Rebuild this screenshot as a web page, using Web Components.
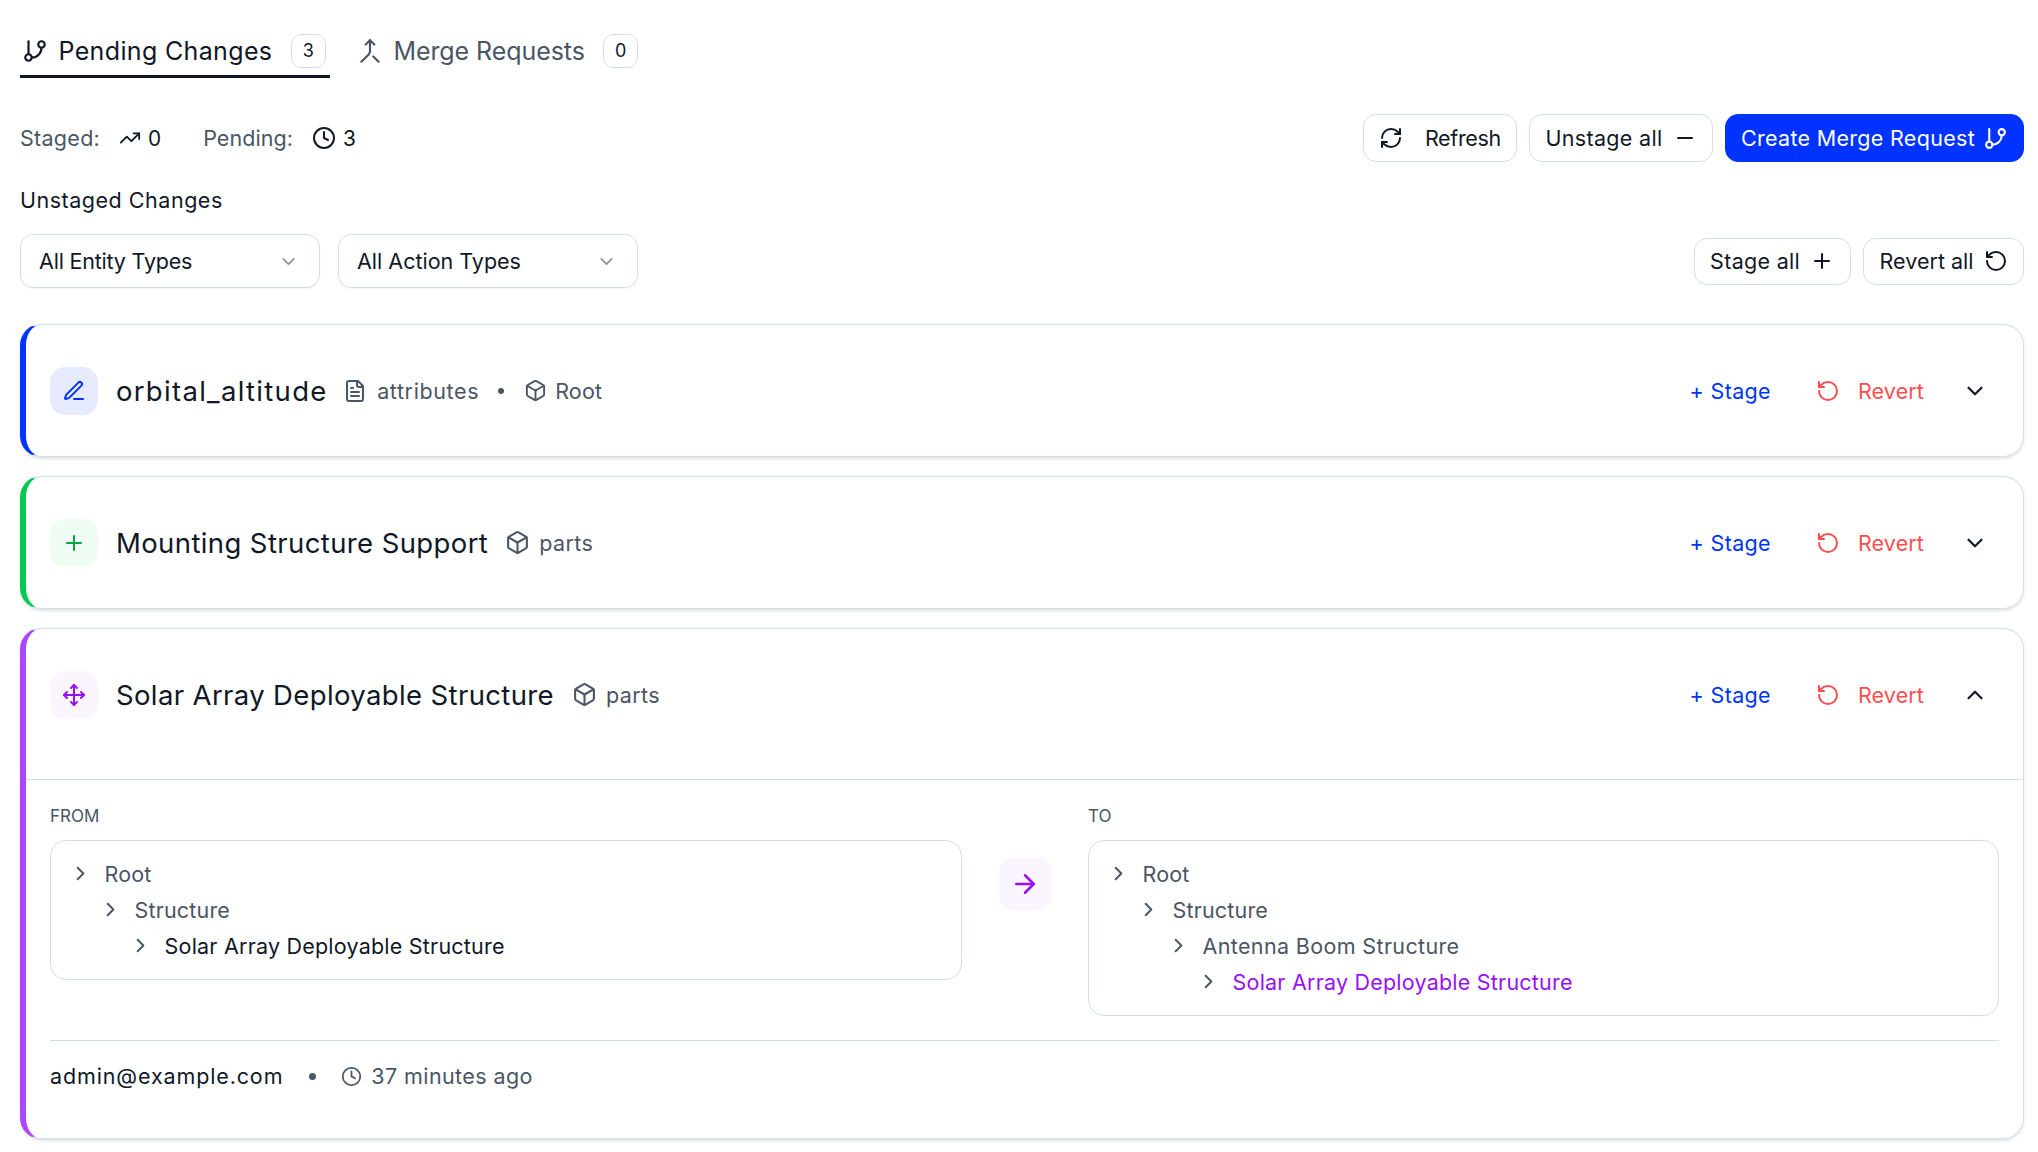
<!DOCTYPE html>
<html>
<head>
<meta charset="utf-8">
<title>Pending Changes</title>
<style>
    html, body { margin: 0; background: #fff; }
    body { font: 400 21.5px "Inter", "Liberation Sans", sans-serif; color: #101828; }
</style>
</head>
<body>
<changes-page></changes-page>

<script>
    const ICONS = {
        branch: '<line x1="6" x2="6" y1="3" y2="15"/><circle cx="18" cy="6" r="3"/><circle cx="6" cy="18" r="3"/><path d="M18 9a9 9 0 0 1-9 9"/>',
        merge: '<path d="m8 6 4-4 4 4"/><path d="M12 2v10.3a4 4 0 0 1-1.172 2.872L4 22"/><path d="m20 22-5-5"/>',
        trending: '<path d="M22 7 13.5 15.5 8.5 10.5 2 17"/><path d="M16 7h6v6"/>',
        clock: '<circle cx="12" cy="12" r="10"/><path d="M12 6v6l4 2"/>',
        refresh: '<path d="M3 12a9 9 0 0 1 9-9 9.75 9.75 0 0 1 6.74 2.74L21 8"/><path d="M21 3v5h-5"/><path d="M21 12a9 9 0 0 1-9 9 9.75 9.75 0 0 1-6.74-2.74L3 16"/><path d="M8 16H3v5"/>',
        minus: '<path d="M5 12h14"/>',
        plus: '<path d="M5 12h14"/><path d="M12 5v14"/>',
        undo: '<path d="M3 12a9 9 0 1 0 9-9 9.75 9.75 0 0 0-6.74 2.74L3 8"/><path d="M3 3v5h5"/>',
        pen: '<path d="M12 20h9"/><path d="M16.376 3.622a1 1 0 0 1 3.002 3.002L7.368 18.635a2 2 0 0 1-.855.506l-2.872.838a.5.5 0 0 1-.62-.62l.838-2.872a2 2 0 0 1 .506-.854z"/>',
        file: '<path d="M15 2H6a2 2 0 0 0-2 2v16a2 2 0 0 0 2 2h12a2 2 0 0 0 2-2V7Z"/><path d="M14 2v4a2 2 0 0 0 2 2h4"/><path d="M10 9H8"/><path d="M16 13H8"/><path d="M16 17H8"/>',
        box: '<path d="M21 8a2 2 0 0 0-1-1.73l-7-4a2 2 0 0 0-2 0l-7 4A2 2 0 0 0 3 8v8a2 2 0 0 0 1 1.73l7 4a2 2 0 0 0 2 0l7-4A2 2 0 0 0 21 16Z"/><path d="m3.3 7 8.7 5 8.7-5"/><path d="M12 22V12"/>',
        move: '<path d="M12 2v20"/><path d="m15 19-3 3-3-3"/><path d="m19 9 3 3-3 3"/><path d="M2 12h20"/><path d="m5 9-3 3 3 3"/><path d="m9 5 3-3 3 3"/>',
        down: '<path d="m6 9 6 6 6-6"/>',
        up: '<path d="m18 15-6-6-6 6"/>',
        right: '<path d="m9 18 6-6-6-6"/>',
        arrow: '<path d="M5 12h14"/><path d="m12 5 7 7-7 7"/>'
    };

    class UiIcon extends HTMLElement {
        connectedCallback() {
            const size = this.getAttribute("size") || 24;
            const stroke = this.getAttribute("stroke") || 2;
            this.attachShadow({ mode: "open" }).innerHTML = `
                <style>
                    :host { display: inline-flex; flex: none; width: ${size}px; height: ${size}px; }
                    svg { width: 100%; height: 100%; fill: none; stroke: currentColor; stroke-width: ${stroke}; stroke-linecap: round; stroke-linejoin: round; }
                </style>
                <svg viewBox="0 0 24 24">${ICONS[this.getAttribute("name")]}</svg>`;
        }
    }

    class TabItem extends HTMLElement {
        connectedCallback() {
            const active = this.hasAttribute("active");
            this.attachShadow({ mode: "open" }).innerHTML = `
                <style>
                    :host { display: flex; align-items: center; height: 54px; padding: 2px 4px 0 2px; box-sizing: border-box;
                            font-size: 25px; color: ${active ? "#101828" : "#4a5565"};
                            border-bottom: 3px solid ${active ? "#101828" : "transparent"}; margin-top: 24px; }
                    ui-icon { margin-right: 10.5px; }
                    .badge { margin-left: 18.5px; width: 35px; height: 34px; box-sizing: border-box; display: flex; align-items: center; justify-content: center;
                             border: 1.3px solid #d5dde9; border-radius: 10px; font-size: 18px; letter-spacing: 0; color: #101828; }
                </style>
                <ui-icon name="${this.getAttribute("icon")}" size="26"></ui-icon>
                <slot></slot>
                <span class="badge">${this.getAttribute("count")}</span>`;
        }
    }

    class StatItem extends HTMLElement {
        connectedCallback() {
            this.attachShadow({ mode: "open" }).innerHTML = `
                <style>
                    :host { display: flex; align-items: center; }
                    .label { color: #4a5565; margin-right: 19px; }
                    .value { margin-left: 7px; letter-spacing: 0; font-size: 20.8px; }
                </style>
                <span class="label"><slot></slot></span>
                <ui-icon name="${this.getAttribute("icon")}" size="${this.getAttribute("size")}"></ui-icon>
                <span class="value">${this.getAttribute("value")}</span>`;
        }
    }

    class UiButton extends HTMLElement {
        connectedCallback() {
            const primary = this.hasAttribute("primary");
            this.attachShadow({ mode: "open" }).innerHTML = `
                <style>
                    :host { display: inline-flex; align-items: center; box-sizing: border-box; height: var(--btn-h, 48px); padding: 0 var(--btn-pad, 15px);
                            border-radius: 13px; border: 1.3px solid ${primary ? "#0033ff" : "#d5dde9"};
                            background: ${primary ? "#0033ff" : "#fff"}; color: ${primary ? "#fff" : "#101828"}; }
                    ui-icon { margin-left: ${primary ? 8 : 10}px; }
                    :host([lead]) ui-icon { margin: 0 22px 0 0; }
                </style>
                ${this.hasAttribute("lead") ? `<ui-icon name="${this.getAttribute("icon")}" size="24"></ui-icon><slot></slot>`
                    : `<slot></slot><ui-icon name="${this.getAttribute("icon")}" size="${this.getAttribute("size") || 24}"></ui-icon>`}`;
        }
    }

    class SelectBox extends HTMLElement {
        connectedCallback() {
            this.attachShadow({ mode: "open" }).innerHTML = `
                <style>
                    :host { display: flex; align-items: center; justify-content: space-between; box-sizing: border-box; width: 300px; height: 54px;
                            padding: 0 20px 0 18px; border: 1.3px solid #d5dde9; border-radius: 13px; box-shadow: 0 1px 2px rgba(16, 24, 40, .05); }
                    ui-icon { color: #8a94a6; }
                </style>
                <slot></slot>
                <ui-icon name="down" size="21"></ui-icon>`;
        }
    }

    class ChangeCard extends HTMLElement {
        connectedCallback() {
            const color = this.getAttribute("color");
            const open = this.hasAttribute("open");
            this.attachShadow({ mode: "open" }).innerHTML = `
                <style>
                    :host { display: block; box-sizing: border-box; border: 1.3px solid #d5dde9; border-left: 6px solid ${color}; border-radius: 21px;
                            box-shadow: 0 1.3px 3px rgba(16, 24, 40, .12); }
                    .head { display: flex; align-items: center; padding: 41.5px 35px ${open ? "60px" : "41.5px"} 24px; }
                    .glyph { width: 48px; height: 48px; display: flex; align-items: center; justify-content: center; flex: none;
                             border-radius: 15px; background: ${this.getAttribute("tint")}; color: ${this.getAttribute("ink")}; margin-right: 18px; }
                    .title { font-size: 27.5px; margin-right: ${this.getAttribute("title-gap") || 18}px; }
                    .meta { display: flex; align-items: center; color: #4a5565; flex: 1; }
                    .stage { color: #0033ff; letter-spacing: .34px; margin-right: 45px; }
                    .revert { display: flex; align-items: center; color: #fb4f4f; letter-spacing: .12px; margin-right: 38px; }
                    .revert ui-icon { margin-right: 18px; }
                </style>
                <div class="head">
                    <span class="glyph"><ui-icon name="${this.getAttribute("icon")}" size="24"></ui-icon></span>
                    <span class="title" style="letter-spacing:${this.getAttribute("ls")}px">${this.getAttribute("title")}</span>
                    <span class="meta"><slot name="meta"></slot></span>
                    <span class="stage">+ Stage</span>
                    <span class="revert"><ui-icon name="undo" size="24"></ui-icon>Revert</span>
                    <ui-icon name="${open ? "up" : "down"}" size="26"></ui-icon>
                </div>
                <slot></slot>`;
        }
    }

    class MetaItem extends HTMLElement {
        connectedCallback() {
            const size = this.getAttribute("size") || 24;
            this.attachShadow({ mode: "open" }).innerHTML = `
                <style>
                    :host { display: inline-flex; align-items: center; }
                    ui-icon { margin-right: ${this.getAttribute("gap") || 9}px; }
                </style>
                <ui-icon name="${this.getAttribute("icon")}" size="${size}"></ui-icon>
                <slot></slot>`;
        }
    }

    class PathTree extends HTMLElement {
        connectedCallback() {
            const rows = this.getAttribute("path").split("/");
            const accent = this.getAttribute("accent") || "#101828";
            const html = rows.map((name, i) => `
                <div class="row" style="padding-left:${i * 30}px">
                    <ui-icon name="right" size="23"></ui-icon>
                    <span style="color:${i === rows.length - 1 ? accent : "#4a5565"}; letter-spacing:${this.spacing(name)}px">${name}</span>
                </div>`).join("");
            this.attachShadow({ mode: "open" }).innerHTML = `
                <style>
                    :host { display: block; box-sizing: border-box; border: 1.3px solid #d5dde9; border-radius: 16px; padding: 15px 18px 15px; }
                    .row { display: flex; align-items: center; height: 36px; }
                    ui-icon { color: #4a5565; margin-right: 12.5px; }
                </style>
                ${html}`;
        }

        spacing(name) {
            if (name === "Root") return .16;
            if (name === "Structure") return .18;
            if (name === "Antenna Boom Structure") return .36;
            return .22;
        }
    }

    class MoveDetail extends HTMLElement {
        connectedCallback() {
            this.attachShadow({ mode: "open" }).innerHTML = `
                <style>
                    :host { display: block; border-top: 1.3px solid #d5dde9; padding: 0 24px; }
                    .grid { display: grid; grid-template-columns: 912px 1fr 911px; padding: 25px 0 24px; align-items: start; }
                    .label { font-size: 17px; line-height: 22px; color: #4a5565; margin-bottom: 13px; text-transform: uppercase; }
                    .arrow { width: 53px; height: 54px; margin: 52px auto 0; border-radius: 15px; background: #faf5ff; color: #9810fa;
                             display: flex; align-items: center; justify-content: center; }
                    .foot { display: flex; align-items: center; box-sizing: border-box; height: 98px; border-top: 1.3px solid #d5dde9; padding-bottom: 26px; letter-spacing: .87px; }
                    .dot { width: 7px; height: 7px; border-radius: 50%; background: #4a5565; margin: 0 25px 0 26px; }
                    .ago { display: flex; align-items: center; color: #4a5565; letter-spacing: .4px; }
                    .ago ui-icon { margin-right: 9px; }
                </style>
                <div class="grid">
                    <div><div class="label">From</div><slot name="from"></slot></div>
                    <div class="arrow"><ui-icon name="arrow" size="30"></ui-icon></div>
                    <div><div class="label">To</div><slot name="to"></slot></div>
                </div>
                <div class="foot">
                    <slot name="author"></slot>
                    <span class="dot"></span>
                    <span class="ago"><ui-icon name="clock" size="21"></ui-icon><slot name="time"></slot></span>
                </div>`;
        }
    }

    class ChangesPage extends HTMLElement {
        connectedCallback() {
            this.attachShadow({ mode: "open" }).innerHTML = `
                <style>
                    :host { display: block; padding: 0 14px 15px 20px; }
                    .tabs { display: flex; gap: 25px; }
                    .bar { display: flex; align-items: center; margin-top: 36px; }
                    .stats { display: flex; gap: 42px; flex: 1; }
                    .actions { display: flex; gap: 12.5px; }
                    .sub { margin: 25px 0 21px; line-height: 26px; letter-spacing: .52px; }
                    .filters { display: flex; align-items: center; gap: 18px; }
                    .filters .actions { margin-left: auto; --btn-h: 47px; --btn-pad: 15.5px; }
                    .list { display: flex; flex-direction: column; gap: 19px; margin-top: 36px; }
                    .sep { width: 6px; height: 6px; border-radius: 50%; background: #4a5565; margin: 0 20px 0 19px; }
                    .meta { display: flex; align-items: center; }
                </style>
                <div class="tabs">
                    <tab-item active icon="branch" count="3" style="letter-spacing:.35px">Pending Changes</tab-item>
                    <tab-item icon="merge" count="0" style="letter-spacing:-.07px">Merge Requests</tab-item>
                </div>
                <div class="bar">
                    <div class="stats">
                        <stat-item icon="trending" size="22" value="0" style="letter-spacing:.28px">Staged:</stat-item>
                        <stat-item icon="clock" size="24" value="3" style="letter-spacing:.05px">Pending:</stat-item>
                    </div>
                    <div class="actions">
                        <ui-button lead icon="refresh" style="letter-spacing:-.33px">Refresh</ui-button>
                        <ui-button icon="minus" style="letter-spacing:.32px">Unstage all</ui-button>
                        <ui-button primary icon="branch" size="25" style="letter-spacing:.3px">Create Merge Request</ui-button>
                    </div>
                </div>
                <div class="sub">Unstaged Changes</div>
                <div class="filters">
                    <select-box style="letter-spacing:-.2px">All Entity Types</select-box>
                    <select-box style="letter-spacing:0">All Action Types</select-box>
                    <div class="actions">
                        <ui-button icon="plus" size="24" style="letter-spacing:.3px">Stage all</ui-button>
                        <ui-button icon="undo" size="24" style="letter-spacing:.01px">Revert all</ui-button>
                    </div>
                </div>
                <div class="list">
                    <change-card color="#0033ff" tint="#e6ebff" ink="#0033ff" icon="pen" title="orbital_altitude" ls="1.3" title-gap="15.5">
                        <span slot="meta" class="meta">
                            <meta-item icon="file" gap="10" style="letter-spacing:.62px">attributes</meta-item>
                            <span class="sep"></span>
                            <meta-item icon="box" size="23" gap="8" style="letter-spacing:.16px">Root</meta-item>
                        </span>
                    </change-card>
                    <change-card color="#00c950" tint="#f0fdf4" ink="#00a63e" icon="plus" title="Mounting Structure Support" ls=".39" title-gap="17">
                        <meta-item slot="meta" icon="box" size="25" style="letter-spacing:.39px">parts</meta-item>
                    </change-card>
                    <change-card open color="#ad46ff" tint="#faf5ff" ink="#9810fa" icon="move" title="Solar Array Deployable Structure" ls=".37">
                        <meta-item slot="meta" icon="box" size="25" style="letter-spacing:.39px">parts</meta-item>
                        <move-detail>
                            <path-tree slot="from" path="Root/Structure/Solar Array Deployable Structure"></path-tree>
                            <path-tree slot="to" accent="#9810fa" path="Root/Structure/Antenna Boom Structure/Solar Array Deployable Structure"></path-tree>
                            <span slot="author">admin@example.com</span>
                            <span slot="time">37 minutes ago</span>
                        </move-detail>
                    </change-card>
                </div>`;
        }
    }

    customElements.define("ui-icon", UiIcon);
    customElements.define("tab-item", TabItem);
    customElements.define("stat-item", StatItem);
    customElements.define("ui-button", UiButton);
    customElements.define("select-box", SelectBox);
    customElements.define("change-card", ChangeCard);
    customElements.define("meta-item", MetaItem);
    customElements.define("path-tree", PathTree);
    customElements.define("move-detail", MoveDetail);
    customElements.define("changes-page", ChangesPage);
</script>
</body>
</html>
